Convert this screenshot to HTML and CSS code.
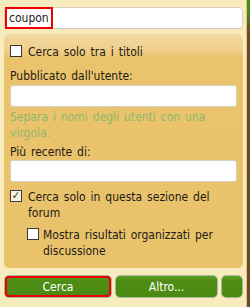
FILE: index.html
```html
<!DOCTYPE html>
<html lang="it">
<head>
    <meta charset="UTF-8">
    <title>Cerca</title>
    <link rel="stylesheet" href="styles.css">
</head>
<body>
    <div class="page">
        <div class="popup">
            <div class="query">
                <span class="query-text">coupon</span>
            </div>

            <div class="options">
                <label class="check">
                    <span class="box"></span>
                    <span>Cerca solo tra i titoli</span>
                </label>

                <div class="field-label">Pubblicato dall'utente:</div>
                <div class="field"></div>
                <div class="hint">Separa i nomi degli utenti con una virgola.</div>

                <div class="field-label near">Più recente di:</div>
                <div class="field flush"></div>

                <label class="check after-field">
                    <span class="box checked">&#10003;</span>
                    <span>Cerca solo in questa sezione del forum</span>
                </label>
                <label class="check sub">
                    <span class="box"></span>
                    <span>Mostra risultati organizzati per discussione</span>
                </label>
            </div>

            <div class="buttons">
                <button class="btn btn-main">Cerca</button>
                <button class="btn btn-more">Altro...</button>
                <button class="btn btn-small"></button>
            </div>
        </div>
        <div class="behind"></div>
    </div>
</body>
</html>
```

FILE: styles.css
```css
body {
    margin: 0;
    font-family: "DejaVu Sans Condensed", "DejaVu Sans", Verdana, sans-serif;
    font-size: 12px;
    word-spacing: 1.5px;
    color: #1e1a14;
    background-color: #f8ebbd;
}
.page {
    display: flex;
    height: 307px;
}
.popup {
    width: 247px;
    border-right: 1px solid #dcc58c;
    padding: 7px 3px 0 4px;
    box-sizing: border-box;
}
.behind {
    flex: 1;
    background: linear-gradient(#4b8a18 0, #4b8a18 12px, #6e4b22 30px, #6e4b22 100%);
}
.query {
    height: 22px;
    box-sizing: border-box;
    background-color: #fff;
    border: 1px solid #d6d0bc;
    border-radius: 4px;
    display: flex;
}
.query-text {
    width: 48px;
    box-sizing: border-box;
    border: 2px solid #ee0000;
    margin: -1px 0 -1px 0;
    padding-left: 2px;
    line-height: 18px;
}
.options {
    margin-top: 5px;
    background: linear-gradient(#f3d9a2 0, #f0d08f 14px, #eac36c 24px, #e9c36c 100%);
    border-radius: 5px;
    padding: 10px 6px 9px 6px;
}
.check {
    display: flex;
    align-items: flex-start;
    gap: 6px;
    line-height: 16px;
}
.check.after-field {
    margin-top: 7px;
}
.check.sub {
    margin: 6px 0 0 17px;
    gap: 4px;
}
.box {
    flex: none;
    width: 10px;
    height: 10px;
    margin-top: 1px;
    border: 1px solid #3a3a3a;
    background-color: #fff;
    font-size: 11px;
    line-height: 10px;
    text-align: center;
    color: #333;
}
.box.checked {
    background-color: #fbf3e0;
}
.field-label {
    line-height: 16px;
    margin-top: 8px;
}
.field-label.near {
    margin-top: 3px;
}
.field {
    height: 22px;
    box-sizing: border-box;
    margin: 1px 0 0 0;
    background-color: #fff;
    border: 1px solid #d7d0c0;
    border-radius: 3px;
}
.field.flush {
    margin-top: 0;
}
.hint {
    color: #8eb86c;
    line-height: 16px;
    margin-top: 2px;
}
.buttons {
    display: flex;
    gap: 3px;
    margin-top: 7px;
}
.btn {
    height: 23px;
    border: 1px solid #a9b7a0;
    border-radius: 5px;
    background: linear-gradient(#5da323 0, #4e8e14 4px, #4a8a12 100%);
    color: #fff;
    font-family: "DejaVu Sans Condensed", "DejaVu Sans", Verdana, sans-serif;
    font-size: 12px;
    padding: 0;
}
.btn-main {
    width: 108px;
    outline: 2px solid #ee0000;
    outline-offset: -3px;
}
.btn-more {
    width: 103px;
}
.btn-small {
    width: 22px;
}
```
